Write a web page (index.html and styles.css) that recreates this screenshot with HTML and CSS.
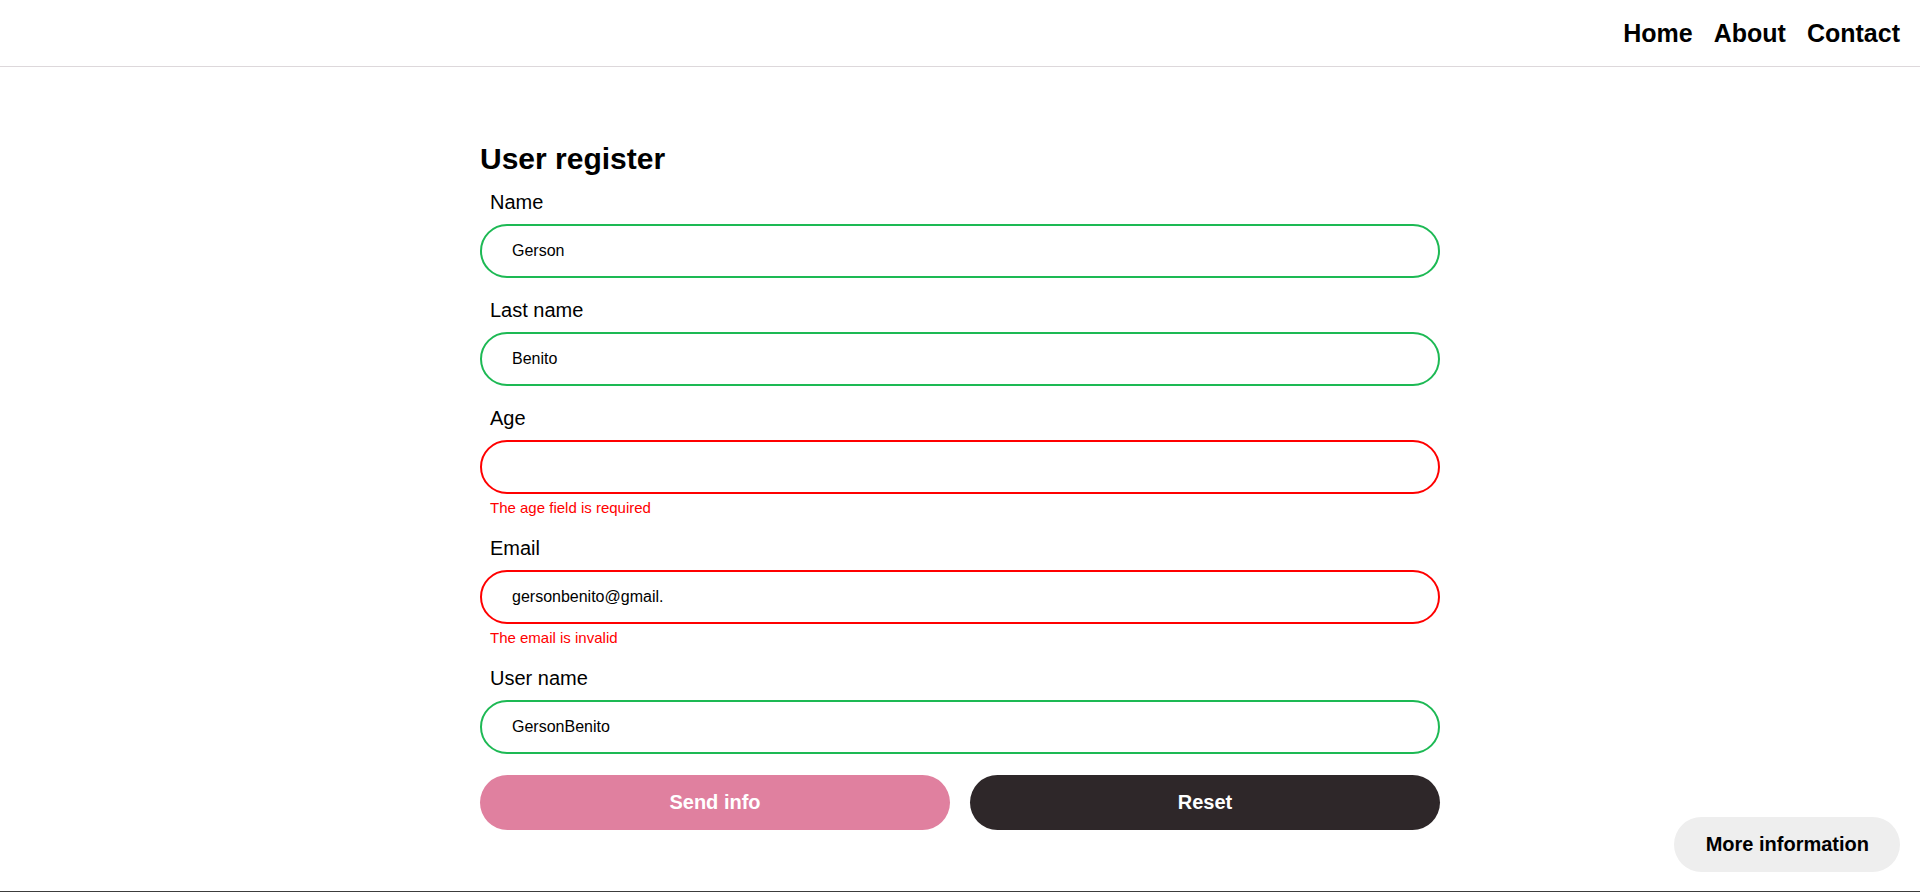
FILE: index.html
```html
<!DOCTYPE html>
<html lang="en">
<head>
<meta charset="utf-8">
<title>User register</title>
<link rel="stylesheet" href="styles.css">
</head>
<body>
<header class="topbar">
  <nav class="nav">
    <a class="nav-link" href="#">Home</a>
    <a class="nav-link" href="#">About</a>
    <a class="nav-link" href="#">Contact</a>
  </nav>
</header>
<main class="main">
  <form class="form">
    <h1 class="title">User register</h1>
    <div class="group">
      <label class="label">Name</label>
      <input class="field valid" type="text" value="Gerson">
    </div>
    <div class="group">
      <label class="label">Last name</label>
      <input class="field valid" type="text" value="Benito">
    </div>
    <div class="group">
      <label class="label">Age</label>
      <input class="field invalid" type="text" value="">
      <p class="error">The age field is required</p>
    </div>
    <div class="group">
      <label class="label">Email</label>
      <input class="field invalid" type="text" value="gersonbenito@gmail.">
      <p class="error">The email is invalid</p>
    </div>
    <div class="group">
      <label class="label">User name</label>
      <input class="field valid" type="text" value="GersonBenito">
    </div>
    <div class="actions">
      <button class="btn btn-send" type="button">Send info</button>
      <button class="btn btn-reset" type="button">Reset</button>
    </div>
  </form>
</main>
<footer class="footer"></footer>
<button class="more" type="button">More information</button>
</body>
</html>
```
FILE: styles.css
```css
html, body {
  margin: 0;
  padding: 0;
}
body {
  height: 100vh;
  display: flex;
  flex-direction: column;
  overflow: hidden;
  font-family: "Liberation Sans", Arial, sans-serif;
  color: #000;
  background: #fff;
}
.topbar {
  height: 66px;
  flex: 0 0 auto;
  border-bottom: 1px solid #ddd8db;
  display: flex;
  justify-content: flex-end;
  align-items: center;
  padding: 0 20px;
}
.nav {
  display: flex;
  gap: 21px;
}
.nav-link {
  font-size: 25px;
  font-weight: 700;
  color: #000;
  text-decoration: none;
}
.main {
  flex: 1 1 auto;
}
.form {
  width: 960px;
  margin: 0 auto;
  padding-top: 75px;
}
.title {
  margin: 0 0 15px;
  font-size: 30px;
  line-height: 34px;
  font-weight: 700;
}
.group {
  margin-bottom: 21px;
}
.label {
  display: block;
  padding-left: 10px;
  font-size: 20px;
  line-height: 23px;
  margin-bottom: 10px;
}
.field {
  display: block;
  width: 100%;
  height: 54px;
  box-sizing: border-box;
  border-radius: 27px;
  border: 2px solid #1db954;
  padding: 0 30px;
  font-family: "Liberation Sans", Arial, sans-serif;
  font-size: 16px;
  color: #000;
  background: #fff;
  outline: none;
}
.field.invalid {
  border-color: #ff0000;
}
.error {
  margin: 5px 0 0;
  padding-left: 10px;
  font-size: 15px;
  line-height: 17px;
  color: #ff0000;
}
.actions {
  display: grid;
  grid-template-columns: 1fr 1fr;
  gap: 20px;
}
.btn {
  height: 55px;
  border: none;
  border-radius: 28px;
  font-family: "Liberation Sans", Arial, sans-serif;
  font-size: 20px;
  font-weight: 700;
  color: #fff;
  cursor: pointer;
}
.btn-send {
  background: #e0809f;
}
.btn-reset {
  background: #2e2729;
}
.footer {
  height: 1px;
  flex: 0 0 auto;
  background: #3c3c3c;
}
.more {
  position: fixed;
  right: 20px;
  bottom: 20px;
  height: 55px;
  padding: 0 31px 0 32px;
  border: none;
  border-radius: 28px;
  background: #eeeeee;
  font-family: "Liberation Sans", Arial, sans-serif;
  font-size: 20px;
  font-weight: 700;
  color: #000;
}
```
